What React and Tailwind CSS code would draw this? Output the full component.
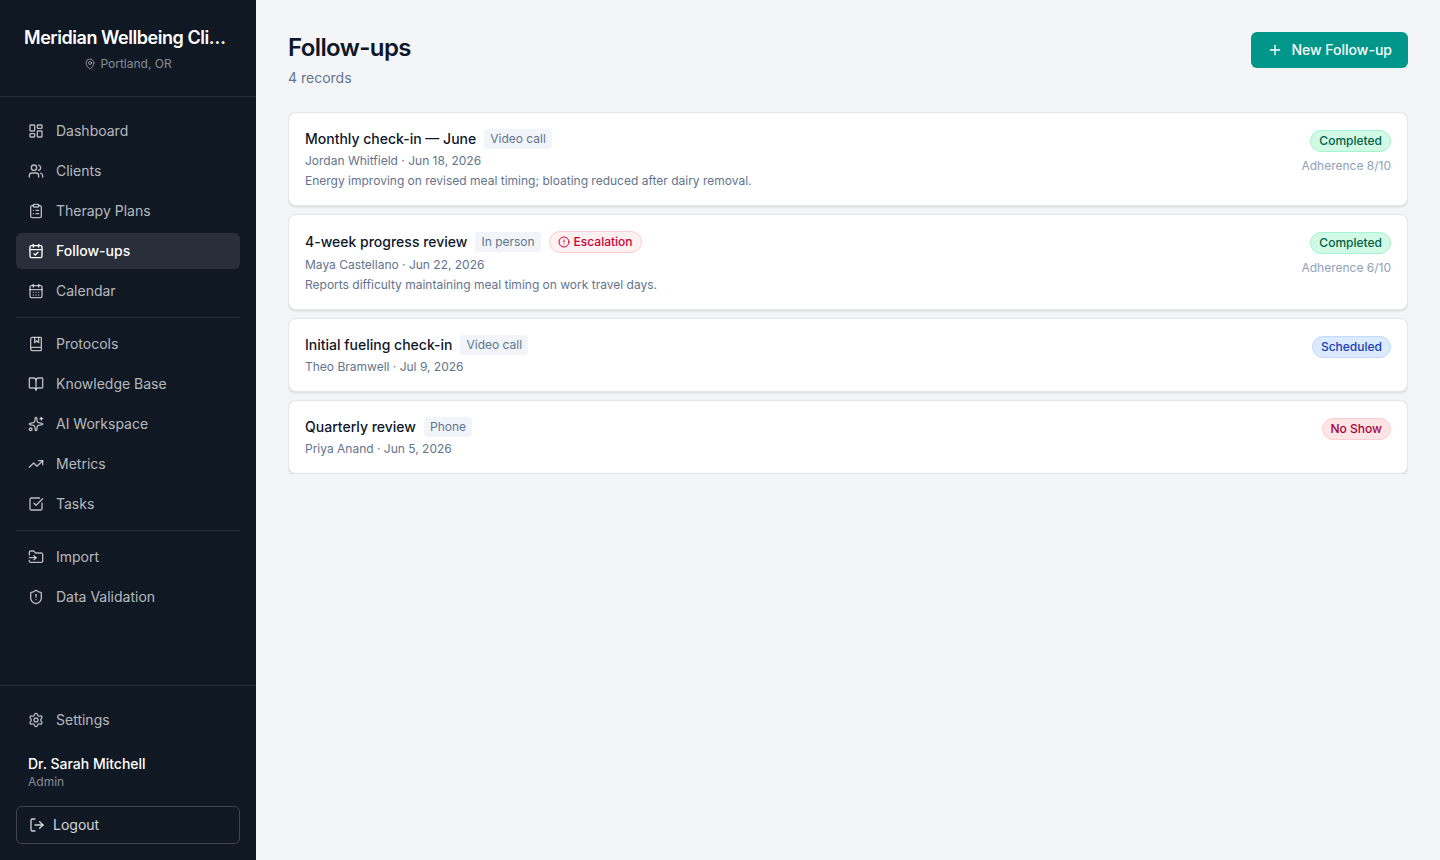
import {
  BookMarked,
  BookOpen,
  CalendarCheck,
  CalendarDays,
  CircleAlert,
  ClipboardList,
  FolderInput,
  LayoutDashboard,
  LogOut,
  MapPin,
  Plus,
  Settings,
  ShieldAlert,
  Sparkles,
  SquareCheckBig,
  TrendingUp,
  Users,
} from 'lucide-react';

const navGroups = [
  [
    { label: 'Dashboard', icon: LayoutDashboard },
    { label: 'Clients', icon: Users },
    { label: 'Therapy Plans', icon: ClipboardList },
    { label: 'Follow-ups', icon: CalendarCheck, active: true },
    { label: 'Calendar', icon: CalendarDays },
  ],
  [
    { label: 'Protocols', icon: BookMarked },
    { label: 'Knowledge Base', icon: BookOpen },
    { label: 'AI Workspace', icon: Sparkles },
    { label: 'Metrics', icon: TrendingUp },
    { label: 'Tasks', icon: SquareCheckBig },
  ],
  [
    { label: 'Import', icon: FolderInput },
    { label: 'Data Validation', icon: ShieldAlert },
  ],
];

const followUps = [
  {
    title: 'Monthly check-in — June',
    channel: 'Video call',
    client: 'Jordan Whitfield',
    date: 'Jun 18, 2026',
    notes: 'Energy improving on revised meal timing; bloating reduced after dairy removal.',
    status: 'Completed',
    adherence: 8,
  },
  {
    title: '4-week progress review',
    channel: 'In person',
    client: 'Maya Castellano',
    date: 'Jun 22, 2026',
    notes: 'Reports difficulty maintaining meal timing on work travel days.',
    status: 'Completed',
    adherence: 6,
    escalation: true,
  },
  {
    title: 'Initial fueling check-in',
    channel: 'Video call',
    client: 'Theo Bramwell',
    date: 'Jul 9, 2026',
    status: 'Scheduled',
  },
  {
    title: 'Quarterly review',
    channel: 'Phone',
    client: 'Priya Anand',
    date: 'Jun 5, 2026',
    status: 'No Show',
  },
];

const statusStyles = {
  Completed: 'bg-emerald-100 text-emerald-800 border-emerald-200',
  Scheduled: 'bg-blue-100 text-blue-800 border-blue-200',
  'No Show': 'bg-rose-100 text-rose-800 border-rose-200',
};

function NavItem({ label, icon: Icon, active }) {
  return (
    <a
      href="#"
      aria-current={active ? 'page' : undefined}
      className={`flex items-center gap-3 rounded-md px-3 py-2 text-sm ${
        active ? 'bg-white/10 font-medium text-white' : 'text-white/70 hover:bg-white/5'
      }`}
    >
      <Icon className="size-4 shrink-0" />
      {label}
    </a>
  );
}

function Sidebar() {
  return (
    <aside className="flex w-64 shrink-0 flex-col bg-[#101824] text-white">
      <div className="border-b border-white/10 p-6 text-center">
        <p className="truncate text-lg leading-7 font-semibold tracking-tight">
          Meridian Wellbeing Clinic
        </p>
        <p className="mt-1 flex items-center justify-center gap-1 text-xs text-white/50">
          <MapPin className="size-3" />
          Portland, OR
        </p>
      </div>

      <nav className="flex flex-1 flex-col gap-1 p-4">
        {navGroups.map((group, i) => (
          <div key={i} className="contents">
            {i > 0 && <hr className="my-1 border-white/10" />}
            {group.map((item) => (
              <NavItem key={item.label} {...item} />
            ))}
          </div>
        ))}
      </nav>

      <div className="border-t border-white/10 p-4">
        <NavItem label="Settings" icon={Settings} />
        <div className="px-3 py-4">
          <p className="text-sm font-medium">Dr. Sarah Mitchell</p>
          <p className="text-xs text-white/50">Admin</p>
        </div>
        <button
          type="button"
          className="flex w-full items-center gap-2 rounded-md border border-white/20 px-3 py-2 text-sm text-white/80 hover:bg-white/5"
        >
          <LogOut className="size-4" />
          Logout
        </button>
      </div>
    </aside>
  );
}

function FollowUpCard({ item }) {
  return (
    <li className="flex items-start justify-between gap-4 rounded-lg border border-gray-200 bg-white p-4 shadow-sm">
      <div className="min-w-0 space-y-1 text-xs text-slate-500">
        <div className="flex flex-wrap items-center gap-2">
          <h2 className="text-sm font-medium text-slate-900">{item.title}</h2>
          <span className="rounded bg-slate-100 px-1.5 py-0.5">{item.channel}</span>
          {item.escalation && (
            <span className="flex items-center gap-1 rounded-full border border-rose-200 bg-rose-50 px-2 py-0.5 font-medium text-rose-700">
              <CircleAlert className="size-3" />
              Escalation
            </span>
          )}
        </div>
        <p>
          {item.client} · {item.date}
        </p>
        {item.notes && <p>{item.notes}</p>}
      </div>

      <div className="flex shrink-0 flex-col items-end gap-1.5 pt-px text-xs">
        <span
          className={`rounded-full border px-2 py-0.5 font-medium ${statusStyles[item.status]}`}
        >
          {item.status}
        </span>
        {item.adherence && <p className="text-slate-400">Adherence {item.adherence}/10</p>}
      </div>
    </li>
  );
}

function App() {
  return (
    <div className="flex min-h-screen bg-[#f4f5f7] font-['Inter',sans-serif]">
      <Sidebar />

      <main className="min-w-0 flex-1 p-8">
        <header className="mb-6 flex items-start justify-between">
          <div>
            <h1 className="text-2xl font-semibold tracking-tight text-slate-900">Follow-ups</h1>
            <p className="mt-1 text-sm text-slate-500">4 records</p>
          </div>
          <button
            type="button"
            className="flex items-center gap-2 rounded-md bg-teal-600 px-4 py-2 text-sm font-medium text-white hover:bg-teal-700"
          >
            <Plus className="size-4" />
            New Follow-up
          </button>
        </header>

        <ul className="space-y-2 overflow-hidden">
          {followUps.map((item) => (
            <FollowUpCard key={item.title} item={item} />
          ))}
        </ul>
      </main>
    </div>
  );
}

export default App;
